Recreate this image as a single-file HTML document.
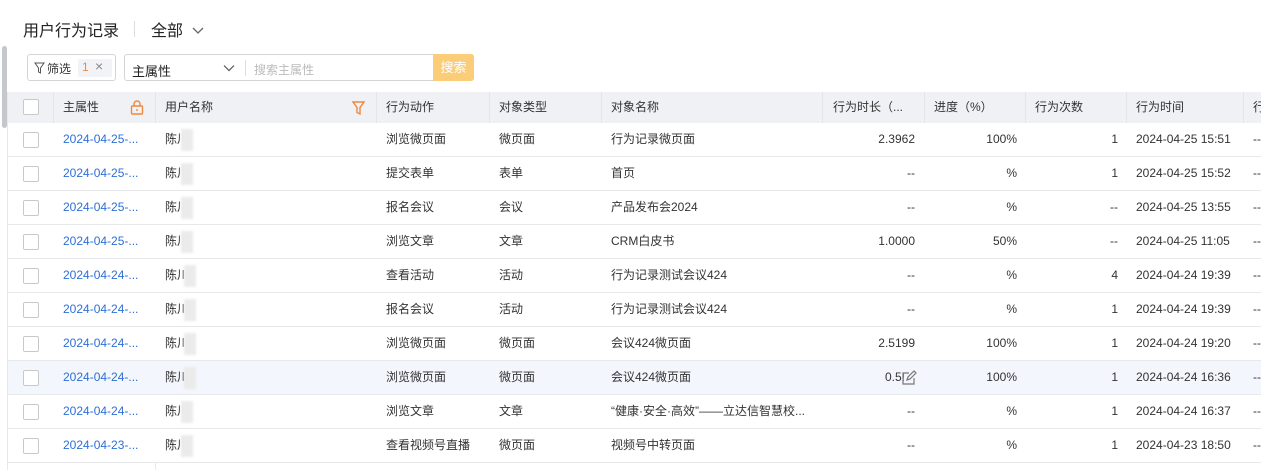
<!DOCTYPE html>
<html><head><meta charset="utf-8"><style>
*{box-sizing:border-box;margin:0;padding:0}
body{width:1261px;height:470px;overflow:hidden;background:#fff;font-family:"Liberation Sans","Noto Sans CJK SC",sans-serif;color:#333;font-size:12px;position:relative}
.abs{position:absolute}
.title{left:23px;top:17px;font-size:16px;color:#222}
.sep{left:134px;top:21px;width:1px;height:16px;background:#ddd}
.all{left:151px;top:17px;font-size:16px;color:#222}
.chip{left:27px;top:54px;width:89px;height:27px;border:1px solid #d5d5d5;border-radius:3px}
.sel{left:124px;top:54px;width:350px;height:27px;border:1px solid #d5d5d5;border-radius:3px}
.btn{left:433px;top:54px;width:41px;height:27px;background:#fbcd78;color:#fff;font-size:13px;line-height:27px;text-align:center;border-radius:0 3px 3px 0}
.lline{left:7px;top:92px;width:1px;height:378px;background:#e8e8e8}
.scroll{left:2px;top:46px;width:5px;height:82px;background:#c4c7cc;border-radius:3px}
.hdr{left:8px;top:92px;width:1253px;height:31px;background:#f0f1f5}
.row{left:8px;width:1253px;height:34px;border-bottom:1px solid #e6e8ec}
.cell{position:absolute;top:0;line-height:31px;white-space:nowrap;font-size:12px}
.row .cell{line-height:33px}
.hs{position:absolute;top:0;width:1px;height:31px;background:#e3e5ea}
.cb{position:absolute;left:15px;top:9px;width:16px;height:16px;border:1px solid #c9c9c9;border-radius:2px;background:#fff}
.lnk{color:#2d6fd6}
.r{text-align:right}
.blur{position:absolute;top:6px;width:12px;height:22px;background:#ebebeb;filter:blur(1px)}
</style></head><body>
<div class="abs scroll"></div>
<div class="abs title">用户行为记录</div>
<div class="abs sep"></div>
<div class="abs all">全部 <svg width="14" height="10" style="margin-left:4px" viewBox="0 0 14 10"><path d="M2 2l5 5 5-5" stroke="#666" fill="none" stroke-width="1.3"/></svg></div>
<div class="abs chip">
 <svg class="abs" style="left:6px;top:7px" width="11" height="12" viewBox="0 0 11 12"><path d="M1 1h9L6.5 6v5l-2-1V6z" stroke="#555" fill="none" stroke-width="1"/></svg>
 <span class="abs" style="left:19px;top:5px;font-size:12px">筛选</span>
 <span class="abs" style="left:50px;top:4px;width:34px;height:18px;background:#f1f3f7;border-radius:2px"></span>
 <span class="abs" style="left:54px;top:5px;color:#f08a3c;font-size:12px">1</span>
 <span class="abs" style="left:67px;top:3px;color:#888;font-size:14px">×</span>
</div>
<div class="abs sel">
 <span class="abs" style="left:7px;top:6px;font-size:13px;color:#222">主属性</span>
 <svg class="abs" style="left:98px;top:9px" width="12" height="8" viewBox="0 0 12 8"><path d="M1 1.5l5 5 5-5" stroke="#555" fill="none" stroke-width="1.2"/></svg>
 <span class="abs" style="left:120px;top:5px;width:1px;height:16px;background:#ddd"></span>
 <span class="abs" style="left:129px;top:6px;font-size:12px;color:#bbb">搜索主属性</span>
</div>
<div class="abs btn">搜索</div>
<div class="abs lline"></div>
<div class="abs hdr">
 <div class="cb" style="top:7px"></div>
 <div class="hs" style="left:45px"></div>
 <div class="cell" style="left:55px">主属性</div>
 <svg class="abs" style="left:122px;top:8px" width="14" height="15" viewBox="0 0 14 15"><rect x="1.5" y="6" width="11" height="8" rx="1" fill="none" stroke="#f0883c" stroke-width="1.4"/><path d="M4 6V4a3 3 0 016 0v2" fill="none" stroke="#f0883c" stroke-width="1.4"/><path d="M7 9v2" stroke="#f0883c" stroke-width="1.4"/></svg>
 <div class="hs" style="left:147px"></div>
 <div class="cell" style="left:157px">用户名称</div>
 <svg class="abs" style="left:344px;top:9px" width="13" height="14" viewBox="0 0 13 14"><path d="M1 1h11L8 6.5V13l-3-1.5V6.5z" fill="none" stroke="#f0883c" stroke-width="1.4"/></svg>
 <div class="hs" style="left:368px"></div>
 <div class="cell" style="left:378px">行为动作</div>
 <div class="hs" style="left:481px"></div>
 <div class="cell" style="left:491px">对象类型</div>
 <div class="hs" style="left:593px"></div>
 <div class="cell" style="left:603px">对象名称</div>
 <div class="hs" style="left:814px"></div>
 <div class="cell" style="left:825px">行为时长（...</div>
 <div class="hs" style="left:916px"></div>
 <div class="cell" style="left:926px">进度（%）</div>
 <div class="hs" style="left:1017px"></div>
 <div class="cell" style="left:1027px">行为次数</div>
 <div class="hs" style="left:1118px"></div>
 <div class="cell" style="left:1128px">行为时间</div>
 <div class="hs" style="left:1235px"></div>
 <div class="cell" style="left:1245px">行</div>
</div>
<div class="abs" style="left:155px;top:123px;width:1px;height:347px;background:#e6e8ec"></div>
<div id="rows"></div>
<script>
var d=[
["2024-04-25-...","陈川","浏览微页面","微页面","行为记录微页面","2.3962","100%","1","2024-04-25 15:51"],
["2024-04-25-...","陈川","提交表单","表单","首页","--","%","1","2024-04-25 15:52"],
["2024-04-25-...","陈川","报名会议","会议","产品发布会2024","--","%","--","2024-04-25 13:55"],
["2024-04-25-...","陈川","浏览文章","文章","CRM白皮书","1.0000","50%","--","2024-04-25 11:05"],
["2024-04-24-...","陈川","查看活动","活动","行为记录测试会议424","--","%","4","2024-04-24 19:39"],
["2024-04-24-...","陈川","报名会议","活动","行为记录测试会议424","--","%","1","2024-04-24 19:39"],
["2024-04-24-...","陈川","浏览微页面","微页面","会议424微页面","2.5199","100%","1","2024-04-24 19:20"],
["2024-04-24-...","陈川","浏览微页面","微页面","会议424微页面","0.5!","100%","1","2024-04-24 16:36"],
["2024-04-24-...","陈川","浏览文章","文章","“健康·安全·高效”——立达信智慧校...","--","%","1","2024-04-24 16:37"],
["2024-04-23-...","陈川","查看视频号直播","微页面","视频号中转页面","--","%","1","2024-04-23 18:50"]];
var h="";
d.forEach(function(r,i){
var top=123+i*34;var bg=i==7?"#f3f6fc":"#fff";
var vw=i==7?83:93;
h+='<div class="abs row" style="top:'+top+'px;background:'+bg+'">'+
'<div class="cb"></div>'+
'<div class="cell lnk" style="left:55px">'+r[0]+'</div>'+
'<div class="cell" style="left:157px">'+r[1]+'</div>'+
'<div class="blur" style="left:'+(i>3&&i<8?176:173)+'px"></div>'+
'<div class="cell" style="left:378px">'+r[2]+'</div>'+
'<div class="cell" style="left:491px">'+r[3]+'</div>'+
'<div class="cell" style="left:603px">'+r[4]+'</div>'+
'<div class="cell r" style="left:814px;width:'+vw+'px">'+r[5]+'</div>'+
'<div class="cell r" style="left:916px;width:93px">'+r[6]+'</div>'+
'<div class="cell r" style="left:1017px;width:93px">'+r[7]+'</div>'+
'<div class="cell" style="left:1128px">'+r[8]+'</div>'+
'<div class="cell" style="left:1245px">--</div>'+
(i==7?'<svg class="abs" style="left:893px;top:9px" width="16" height="16" viewBox="0 0 16 16"><path d="M13 8v6H2V3h6" fill="none" stroke="#777" stroke-width="1.2"/><path d="M6 10l1-3 6-6 2 2-6 6z" fill="none" stroke="#777" stroke-width="1.2"/></svg>':'')+
'</div>';});
document.getElementById("rows").innerHTML=h;
</script>
</body></html>
